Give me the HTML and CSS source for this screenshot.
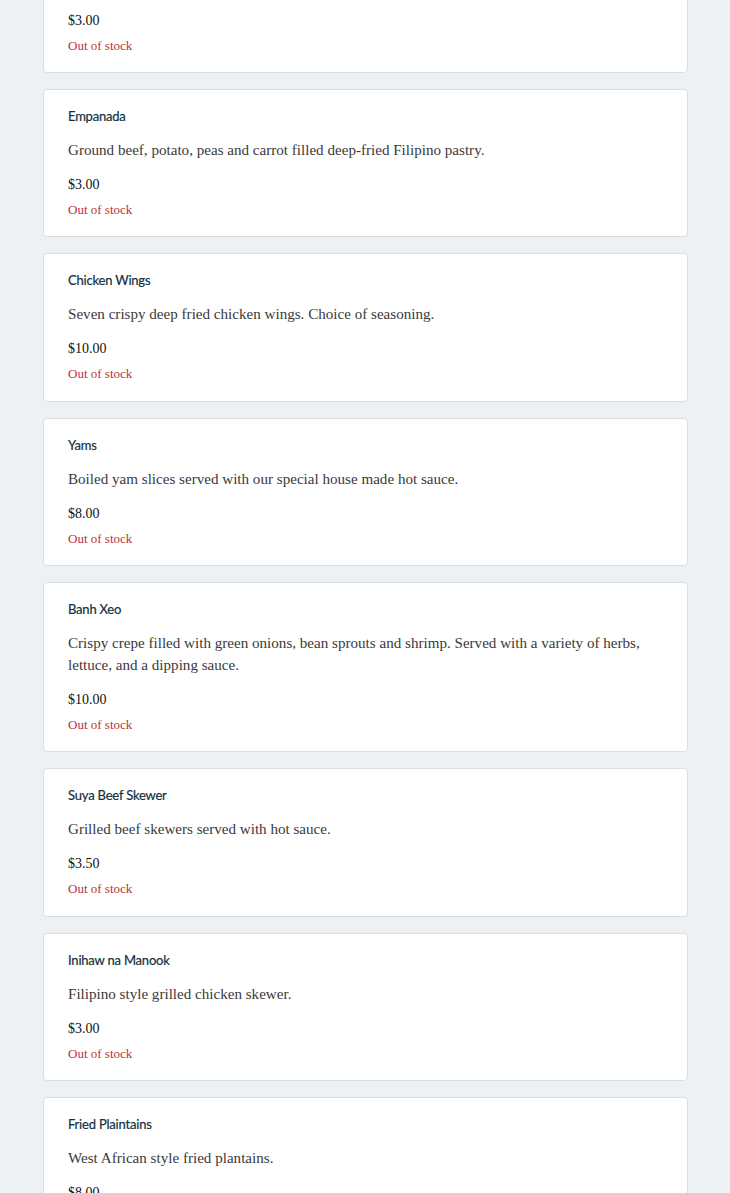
FILE: index.html
```html
<!DOCTYPE html>
<html lang="en">
<head>
<meta charset="utf-8">
<title>Menu</title>
<link rel="stylesheet" href="styles.css">
</head>
<body>
<main class="menu">
  <article class="item">
    <h3 class="item-name">Lumpia</h3>
    <p class="item-desc">Crispy Filipino spring rolls.</p>
    <div class="item-price">$3.00</div>
    <div class="item-stock">Out of stock</div>
  </article>
  <article class="item">
    <h3 class="item-name">Empanada</h3>
    <p class="item-desc">Ground beef, potato, peas and carrot filled deep-fried Filipino pastry.</p>
    <div class="item-price">$3.00</div>
    <div class="item-stock">Out of stock</div>
  </article>
  <article class="item">
    <h3 class="item-name">Chicken Wings</h3>
    <p class="item-desc">Seven crispy deep fried chicken wings. Choice of seasoning.</p>
    <div class="item-price">$10.00</div>
    <div class="item-stock">Out of stock</div>
  </article>
  <article class="item">
    <h3 class="item-name">Yams</h3>
    <p class="item-desc">Boiled yam slices served with our special house made hot sauce.</p>
    <div class="item-price">$8.00</div>
    <div class="item-stock">Out of stock</div>
  </article>
  <article class="item">
    <h3 class="item-name">Banh Xeo</h3>
    <p class="item-desc">Crispy crepe filled with green onions, bean sprouts and shrimp. Served with a variety of herbs, lettuce, and a dipping sauce.</p>
    <div class="item-price">$10.00</div>
    <div class="item-stock">Out of stock</div>
  </article>
  <article class="item">
    <h3 class="item-name">Suya Beef Skewer</h3>
    <p class="item-desc">Grilled beef skewers served with hot sauce.</p>
    <div class="item-price">$3.50</div>
    <div class="item-stock">Out of stock</div>
  </article>
  <article class="item">
    <h3 class="item-name">Inihaw na Manook</h3>
    <p class="item-desc">Filipino style grilled chicken skewer.</p>
    <div class="item-price">$3.00</div>
    <div class="item-stock">Out of stock</div>
  </article>
  <article class="item">
    <h3 class="item-name">Fried Plaintains</h3>
    <p class="item-desc">West African style fried plantains.</p>
    <div class="item-price">$8.00</div>
    <div class="item-stock">Out of stock</div>
  </article>
</main>
</body>
</html>
```

FILE: styles.css
```css
html, body {
  margin: 0;
  padding: 0;
  background: #eef1f4;
}
body {
  font-family: "Liberation Serif", "DejaVu Serif", serif;
  overflow: hidden;
}
.menu {
  display: flex;
  flex-direction: column;
  gap: 16px;
  margin: -75.33px 42px 0 43px;
}
.item {
  background: #ffffff;
  border: 1px solid #dadde2;
  border-radius: 4px;
  padding: 16px 24px 17.33px;
  display: flex;
  flex-direction: column;
}
.item-name {
  margin: 0 0 13px;
  font-family: "Lato", "Noto Sans", sans-serif;
  font-weight: 400;
  font-size: 13px;
  line-height: 20px;
  color: #12303f;
  letter-spacing: -0.2px;
  -webkit-text-stroke: 0.2px #12303f;
}
.item-desc {
  margin: 0 0 14px;
  font-size: 15.1px;
  line-height: 22px;
  color: #3a3a3a;
}
.item-price {
  margin: 0 0 6px;
  font-size: 14px;
  line-height: 20px;
  color: #111111;
}
.item-stock {
  font-size: 13px;
  line-height: 18px;
  color: #b8323c;
}
```
